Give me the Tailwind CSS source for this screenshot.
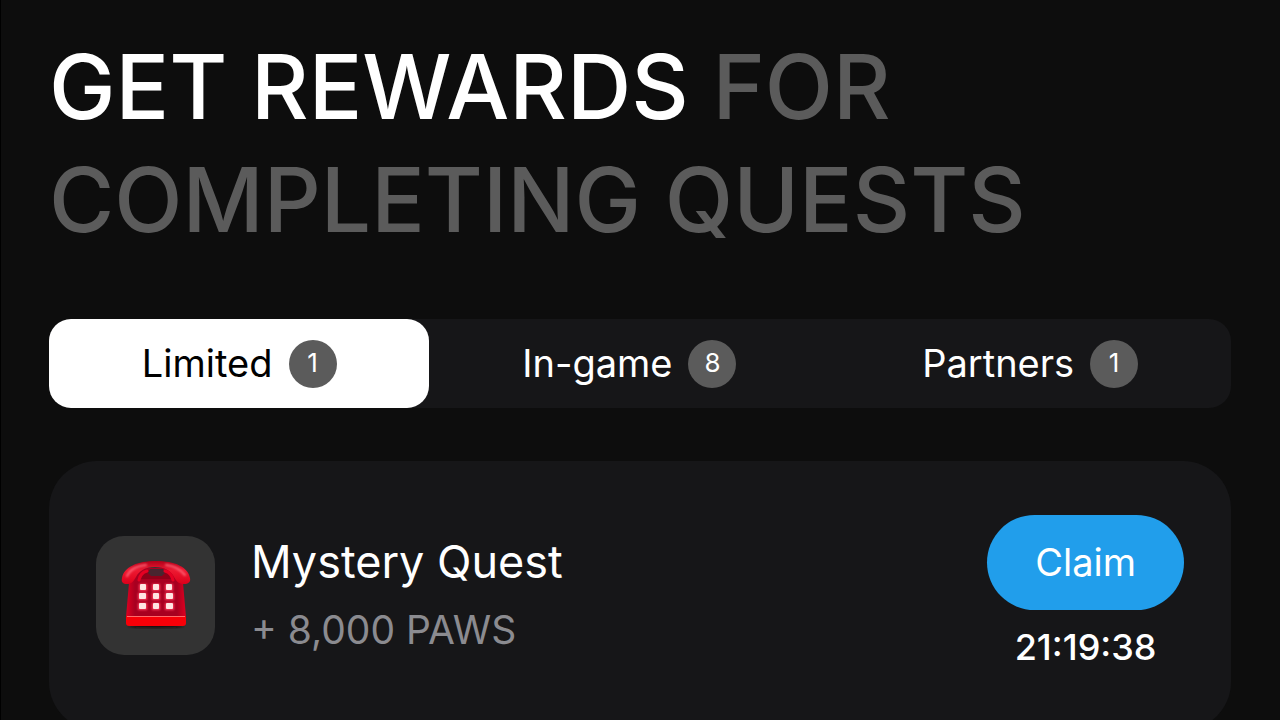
<!DOCTYPE html>
<html lang="en">
<head>
<meta charset="utf-8">
<meta name="viewport" content="width=device-width, initial-scale=1">
<title>Quests</title>
<script src="https://cdn.jsdelivr.net/npm/@tailwindcss/browser@4"></script>
</head>
<body class="min-h-screen overflow-x-hidden border-l border-black bg-[#0d0d0d] font-['Inter',sans-serif] text-white">
<main class="flex flex-col pt-[30px] pr-[49px] pb-12 pl-12">
  <h1 class="text-[89px] leading-[113px] font-medium text-[#5b5b5b]"><span class="text-white">GET REWARDS</span> FOR<br>COMPLETING QUESTS</h1>

  <nav class="mt-[63px] flex h-[89px] rounded-[22px] bg-[#161618] text-[38px]" aria-label="Quest categories">
    <button type="button" aria-pressed="true" class="flex flex-auto items-center justify-center gap-4 rounded-[22px] bg-white text-black">Limited <span class="flex size-12 items-center justify-center rounded-full bg-[#5b5b5b] pb-0.5 text-[26px] text-white">1</span></button>
    <button type="button" aria-pressed="false" class="flex flex-auto items-center justify-center gap-4 rounded-[22px]">In-game <span class="flex size-12 items-center justify-center rounded-full bg-[#5b5b5b] pb-0.5 text-[26px]">8</span></button>
    <button type="button" aria-pressed="false" class="flex flex-auto items-center justify-center gap-4 rounded-[22px]">Partners <span class="flex size-12 items-center justify-center rounded-full bg-[#5b5b5b] pb-0.5 text-[26px]">1</span></button>
  </nav>

  <section class="mt-[53px] flex items-center rounded-[48px] bg-[#161618] py-[54px] pr-[47px] pl-[47px]">
    <div class="flex size-[119px] shrink-0 items-center justify-center rounded-[28px] bg-[#333333]">
      <svg class="h-[76px] w-[76px]" viewBox="0 0 76 76" aria-hidden="true">
        <defs>
          <linearGradient id="handset" x1="0" y1="0" x2="0" y2="1"><stop offset="0" stop-color="#b00019"/><stop offset=".4" stop-color="#ee1a32"/><stop offset="1" stop-color="#dc001b"/></linearGradient>
          <linearGradient id="case" x1="0" y1="0" x2="1" y2="0"><stop offset="0" stop-color="#df0020"/><stop offset=".15" stop-color="#a80020"/><stop offset=".85" stop-color="#a80020"/><stop offset="1" stop-color="#e00020"/></linearGradient>
          <filter id="soft" x="-20%" y="-20%" width="140%" height="140%"><feGaussianBlur stdDeviation="1"/></filter>
        </defs>
        <ellipse cx="38" cy="68" rx="28" ry="2" fill="#1b1111" filter="url(#soft)"/>
        <path d="M23 10h30l12 15 3 34H8l3-34z" fill="url(#case)"/>
        <path d="M27 12h22l4 9H23z" fill="#8e0018"/>
        <path d="M32 11h13l2 4-3 3H33l-3-3z" fill="#48252f"/>
        <path d="M4 20C6 9 19 3 38 3s32 6 34 17c1 4-2 6-6 6-5 0-7-2-10-7-3-6-9-10-19-10s-16 4-19 10c-3 5-5 7-9 7-4 0-6-2-5-6z" fill="url(#handset)"/>
        <path d="M9 18c4-8 11-10 19-11M48 7c9 1 14 4 19 10" fill="none" stroke="#ff6577" stroke-width="2" stroke-linecap="round" filter="url(#soft)"/>
        <path d="M21 22c1-5 4-8 8-9M55 22c-1-5-4-8-8-9" fill="none" stroke="#e50022" stroke-width="3" stroke-linecap="round"/>
        <path d="M8 58h60v7q0 3-3 3H11q-3 0-3-3z" fill="#f80008"/>
        <path d="M9 58.500h58" stroke="#ff6b6b" stroke-width="1"/>
        <g fill="#ff405e" filter="url(#soft)"><path d="M21 26h8v7h-8zM34 26h8v7h-8zM47 26h8v7h-8zM20 35h9v7h-9zM34 35h8v7h-8zM47 35h9v7h-9zM20 45h9v7h-9zM34 45h8v7h-8zM47 45h9v7h-9z"/></g>
        <g fill="#ffe5e2"><rect x="22" y="26" width="6" height="6" rx="1"/><rect x="35" y="26" width="6" height="6" rx="1"/><rect x="48" y="26" width="6" height="6" rx="1"/><rect x="21" y="35" width="7" height="6" rx="1"/><rect x="35" y="35" width="6" height="6" rx="1"/><rect x="48" y="35" width="7" height="6" rx="1"/><rect x="21" y="45" width="7" height="6" rx="1"/><rect x="35" y="45" width="6" height="6" rx="1"/><rect x="48" y="45" width="7" height="6" rx="1"/></g>
      </svg>
    </div>
    <div class="ml-9 min-w-0 flex-1">
      <h2 class="text-[45px] leading-[68px]">Mystery Quest</h2>
      <p class="text-[39px] leading-[68px] text-[#8b8b90]">+ 8,000 PAWS</p>
    </div>
    <div class="flex flex-col items-center gap-3 pb-1">
      <button type="button" class="h-[95px] rounded-full bg-[#219eeb] px-12 text-[38px]">Claim</button>
      <time class="text-[36px] leading-[50px] font-medium">21:19:38</time>
    </div>
  </section>
</main>
</body>
</html>
